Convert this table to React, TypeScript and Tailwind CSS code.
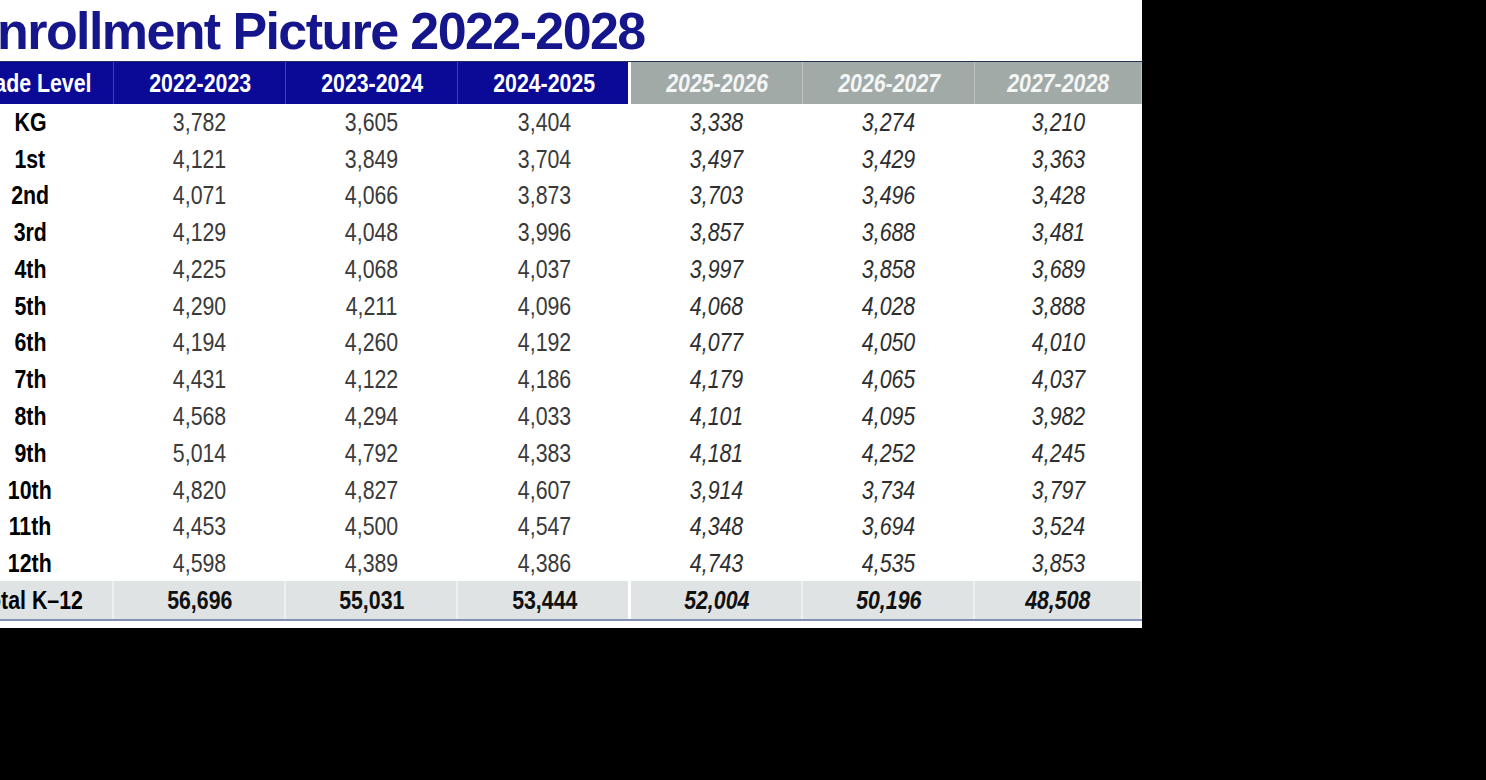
const years = ["2022-2023", "2023-2024", "2024-2025", "2025-2026", "2026-2027", "2027-2028"]

const rows: [string, number[]][] = [
  ["KG", [3782, 3605, 3404, 3338, 3274, 3210]],
  ["1st", [4121, 3849, 3704, 3497, 3429, 3363]],
  ["2nd", [4071, 4066, 3873, 3703, 3496, 3428]],
  ["3rd", [4129, 4048, 3996, 3857, 3688, 3481]],
  ["4th", [4225, 4068, 4037, 3997, 3858, 3689]],
  ["5th", [4290, 4211, 4096, 4068, 4028, 3888]],
  ["6th", [4194, 4260, 4192, 4077, 4050, 4010]],
  ["7th", [4431, 4122, 4186, 4179, 4065, 4037]],
  ["8th", [4568, 4294, 4033, 4101, 4095, 3982]],
  ["9th", [5014, 4792, 4383, 4181, 4252, 4245]],
  ["10th", [4820, 4827, 4607, 3914, 3734, 3797]],
  ["11th", [4453, 4500, 4547, 4348, 3694, 3524]],
  ["12th", [4598, 4389, 4386, 4743, 4535, 3853]],
]

const totals = [56696, 55031, 53444, 52004, 50196, 48508]

const fmt = (n: number) => n.toLocaleString("en-US")

// Arial Narrow look: squeeze the glyphs horizontally
function N({ children }: { children: React.ReactNode }) {
  return <span className="inline-block scale-x-[0.82] whitespace-nowrap">{children}</span>
}

export default function App() {
  return (
    <div className="w-[1486px] h-[780px] bg-black overflow-hidden">
      <div className="w-[1142px] h-[628px] bg-white overflow-hidden">
        <h1
          className="ml-[-36px] h-[61px] pt-[5px] whitespace-nowrap text-[52px] leading-none font-bold tracking-[-1.6px] text-[#15168c]"
          style={{ fontFamily: '"Liberation Sans", Arial, sans-serif' }}
        >
          Enrollment Picture 2022-2028
        </h1>
        <table
          className="ml-[-54px] w-[1196px] table-fixed border-collapse border-t border-t-[#2a2f55] border-r border-r-[#8a96b8] leading-none"
          style={{ fontFamily: '"Liberation Sans", Arial, sans-serif' }}
        >
          <colgroup>
            <col className="w-[168px]" />
            <col className="w-[172px]" />
            <col className="w-[172px]" />
            <col className="w-[173px]" />
            <col className="w-[172px]" />
            <col className="w-[172px]" />
            <col className="w-[167px]" />
          </colgroup>
          <thead>
            <tr className="h-[42px] text-[26px]">
              <th className="bg-[#0a0a96] text-white font-bold shadow-[inset_-1px_0_0_#3444b4]">
                <N>Grade Level</N>
              </th>
              {years.map((y, i) => (
                <th
                  key={y}
                  className={
                    i < 3
                      ? i === 2
                        ? "bg-[#0a0a96] text-white font-bold shadow-[inset_-3px_0_0_#ffffff]"
                        : "bg-[#0a0a96] text-white font-bold shadow-[inset_-1px_0_0_#3444b4]"
                      : "bg-[#a2aaa8] text-[#f4f6f6] italic font-bold shadow-[inset_-1px_0_0_#bcc3c2]"
                  }
                >
                  <N>{y}</N>
                </th>
              ))}
            </tr>
          </thead>
          <tbody>
            {rows.map(([label, vals]) => (
              <tr key={label} className="h-[36.77px] text-[26px]">
                <td className="text-center font-bold text-black">
                  <N>{label}</N>
                </td>
                {vals.map((v, i) => (
                  <td key={i} className={i < 3 ? "text-center text-[#3a3a3a]" : "text-center italic text-[#2e2e2e]"}>
                    <N>{fmt(v)}</N>
                  </td>
                ))}
              </tr>
            ))}
            <tr className="h-[39px] text-[26px] font-bold bg-[#dfe3e3] border-b-[2px] border-b-[#8190b4]">
              <td className="text-center text-black shadow-[inset_-2px_0_0_#edf0f0]">
                <N>Total K–12</N>
              </td>
              {totals.map((v, i) => (
                <td
                  key={i}
                  className={
                    i < 3
                      ? i === 2
                        ? "text-center text-[#111] shadow-[inset_-3px_0_0_#ffffff]"
                        : "text-center text-[#111] shadow-[inset_-2px_0_0_#edf0f0]"
                      : "text-center italic text-[#111] shadow-[inset_-2px_0_0_#edf0f0]"
                  }
                >
                  <N>{fmt(v)}</N>
                </td>
              ))}
            </tr>
          </tbody>
        </table>
      </div>
    </div>
  )
}
